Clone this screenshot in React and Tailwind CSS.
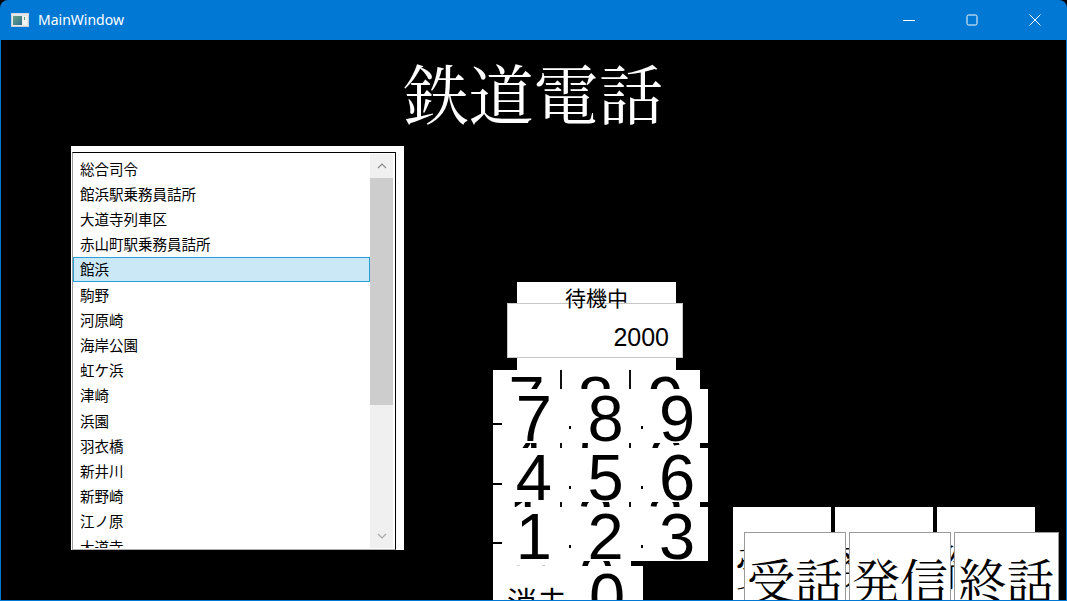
import React from "react";

const items = [
  "総合司令",
  "館浜駅乗務員詰所",
  "大道寺列車区",
  "赤山町駅乗務員詰所",
  "館浜",
  "駒野",
  "河原崎",
  "海岸公園",
  "虹ケ浜",
  "津崎",
  "浜園",
  "羽衣橋",
  "新井川",
  "新野崎",
  "江ノ原",
  "大道寺",
  "赤山町",
];

function TitleBar() {
  return (
    <div className="h-[40px] flex items-center shrink-0 text-white">
      <svg width="18" height="14" viewBox="0 0 18 14" className="ml-[10px]">
        <rect x="0.5" y="0.5" width="17" height="13" fill="#e8e8e8" stroke="#c8d0d8" />
        <defs>
          <linearGradient id="ig" x1="0" y1="0" x2="1" y2="1">
            <stop offset="0" stopColor="#6aa48a" />
            <stop offset="1" stopColor="#2f6f8f" />
          </linearGradient>
        </defs>
        <rect x="2" y="3" width="9" height="9" fill="url(#ig)" />
        <rect x="12" y="3" width="4" height="9" fill="#f4f4f4" />
        <rect x="13" y="4" width="1" height="3" fill="#5aa070" />
        <rect x="0.5" y="0.5" width="17" height="2" fill="#dfe6ee" />
      </svg>
      <span className="ml-[9px] text-[14px] font-['Noto_Sans',sans-serif] leading-none">MainWindow</span>
      <div className="ml-auto flex h-full">
        <div className="w-[63px] h-full flex items-center justify-center">
          <svg width="12" height="12" viewBox="0 0 12 12">
            <line x1="0" y1="6.5" x2="12" y2="6.5" stroke="white" strokeWidth="1" />
          </svg>
        </div>
        <div className="w-[63px] h-full flex items-center justify-center">
          <svg width="12" height="12" viewBox="0 0 12 12">
            <rect x="1" y="1" width="10" height="10" rx="1.5" fill="none" stroke="white" strokeWidth="1" />
          </svg>
        </div>
        <div className="w-[63px] h-full flex items-center justify-center">
          <svg width="12" height="12" viewBox="0 0 12 12">
            <path d="M0.5 0.5 L11.5 11.5 M11.5 0.5 L0.5 11.5" stroke="white" strokeWidth="1" />
          </svg>
        </div>
      </div>
    </div>
  );
}

function ListPanel() {
  return (
    <div className="ml-[70px] w-[333px] h-[404px] bg-white pt-[6px] pl-[1px] shrink-0">
      <div className="w-[324px] h-[398px] border-t border-r border-black border-l border-l-[#9a9a9a] border-b border-b-[#b0b0b0] flex pt-[3px] pb-[1px]">
        <div className="w-[297px] h-full overflow-hidden font-['Noto_Sans_CJK_JP',sans-serif] text-[14.5px] text-black">
          {items.map((t, i) => (
            <div
              key={i}
              className={
                i === 4
                  ? "h-[25.2px] flex items-center pl-[6px] border border-[#26a0da] bg-[#cbe8f6]"
                  : "h-[25.2px] flex items-center pl-[6px] border border-transparent"
              }
            >
              {t}
            </div>
          ))}
        </div>
        <div className="w-[23px] h-[394px] -mt-[2px] bg-[#f0f0f0] flex flex-col">
          <div className="h-[24px] flex items-center justify-center">
            <svg width="10" height="6" viewBox="0 0 10 6">
              <polyline points="1,5 5,1 9,5" fill="none" stroke="#8a8a8a" strokeWidth="1.2" />
            </svg>
          </div>
          <div className="h-[227px] bg-[#cdcdcd]" />
          <div className="flex-1" />
          <div className="h-[24px] flex items-center justify-center">
            <svg width="10" height="6" viewBox="0 0 10 6">
              <polyline points="1,1 5,5 9,1" fill="none" stroke="#a8a8a8" strokeWidth="1.2" />
            </svg>
          </div>
        </div>
      </div>
    </div>
  );
}

const digitFont = "font-['Liberation_Sans',Arial,sans-serif] text-[65px] leading-none text-black";

function BackKeypad() {
  const rows = [["7", "8", "9"], ["4", "5", "6"], ["1", "2", "3"]];
  return (
    <div className="absolute left-0 top-0 w-[207px] bg-white flex flex-col">
      {rows.map((r, i) => (
        <div key={i} className="grid grid-cols-3 h-[59px]">
          {r.map((d, j) => (
            <div key={j} className={j < 2 ? "relative flex justify-center border-r-2 border-[#111]" : "relative flex justify-center"}>
              <span className={digitFont + " -mt-[3px]"}>{d}</span>
            </div>
          ))}
        </div>
      ))}
      <div className="flex h-[59px]">
        <div className="w-[69px] bg-white pl-[6px] pt-[16px] font-['Noto_Sans_CJK_JP',sans-serif] text-[30px] leading-none whitespace-nowrap">消去</div>
        <div className="w-[69px] bg-white flex justify-center">
          <span className={digitFont + " -mt-[3px]"}>0</span>
        </div>
        <div className="flex-1 bg-black" />
      </div>
    </div>
  );
}

function FrontKeypad() {
  const rows = [["7", "8", "9"], ["4", "5", "6"], ["1", "2", "3"]];
  return (
    <div className="absolute left-0 top-[19px] w-[215px] flex flex-col">
      {rows.map((r, i) => (
        <div key={i} className="grid grid-cols-3 h-[59px]">
          {r.map((d, j) => (
            <div key={j} className="flex flex-col">
              <div className="h-[54px] bg-white flex justify-center pl-[10px]">
                <span className={digitFont + " -mt-[3px]"}>{d}</span>
              </div>
            </div>
          ))}
        </div>
      ))}
      <div className="flex h-[59px]">
        <div className="w-[78px] h-full bg-white pl-[14px] pt-[19px] font-['Noto_Sans_CJK_JP',sans-serif] text-[30px] leading-none text-black whitespace-nowrap">
          消去
        </div>
        <div className="w-[72px] h-full bg-white flex justify-center">
          <span className={digitFont + " -mt-[2px]"}>0</span>
        </div>
      </div>
    </div>
  );
}

function Keypad() {
  const ticks = [53, 113, 172];
  return (
    <div className="relative w-[217px] h-[231px] overflow-hidden">
      <BackKeypad />
      <FrontKeypad />
      {ticks.map((y) => (
        <div key={"l" + y} className="absolute left-0 w-[9px] h-[2px] bg-black" style={{ top: y }} />
      ))}
      {ticks.map((y) => (
        <div key={"a" + y} className="absolute left-[76px] w-[2px] h-[3px] bg-black" style={{ top: y + 3 }} />
      ))}
      {ticks.map((y) => (
        <div key={"b" + y} className="absolute left-[148px] w-[2px] h-[3px] bg-black" style={{ top: y + 3 }} />
      ))}
    </div>
  );
}

function Middle() {
  return (
    <div className="ml-[89px] mt-[136px] w-[217px] flex flex-col shrink-0">
      <div className="relative h-[88px]">
        <div className="ml-[24px] w-[159px] h-full bg-white flex justify-center pt-[5px] font-['Noto_Sans_CJK_JP',sans-serif] text-[21px] leading-none text-black">
          <span className="relative z-10">待機中</span>
        </div>
        <div className="absolute left-[14px] top-[21px] w-[176px] h-[55px] bg-white border border-[#c8c8c8] flex justify-end pr-[13px] pt-[21px] font-['Liberation_Sans',Arial,sans-serif] text-[25px] leading-none text-black">
          2000
        </div>
      </div>
      <Keypad />
    </div>
  );
}

const serifCJK = "font-['Noto_Serif_CJK_JP','Noto_Serif_JP','Noto_Sans_CJK_JP',serif]";

function Buttons() {
  const labels = ["受話", "発信", "終話"];
  const frontW = ["w-[102px]", "w-[102px]", "w-[105px]"];
  return (
    <div className="ml-[23px] mt-[361px] relative w-[325px] h-[100px] shrink-0">
      <div className="flex gap-[4px]">
        {labels.map((l) => (
          <div key={l} className={"w-[98px] h-[100px] bg-white pl-[2px] pt-[34px] text-[48px] leading-none text-black whitespace-nowrap overflow-hidden " + serifCJK}>
            {l}
          </div>
        ))}
      </div>
      <div className="absolute left-[11px] top-[25px] flex gap-[3px]">
        {labels.map((l, i) => (
          <div
            key={l}
            className={frontW[i] + " h-[80px] bg-white border border-[#9a9a9a] flex justify-center pt-[22px] text-[48px] leading-none text-black whitespace-nowrap overflow-hidden " + serifCJK}
          >
            {l}
          </div>
        ))}
      </div>
    </div>
  );
}

export default function App() {
  return (
    <div className="w-[1067px] h-[601px] bg-black overflow-hidden">
      <div className="w-full h-full rounded-t-[8px] bg-[#0078d4] px-[1px] pb-[1px] flex flex-col">
        <TitleBar />
        <div className="flex-1 bg-black overflow-hidden flex flex-col">
          <div className={"h-[106px] shrink-0 flex justify-center pt-[19px] text-[65px] leading-none text-white " + serifCJK}>
            鉄道電話
          </div>
          <div className="flex items-start">
            <ListPanel />
            <Middle />
            <Buttons />
          </div>
        </div>
      </div>
    </div>
  );
}
